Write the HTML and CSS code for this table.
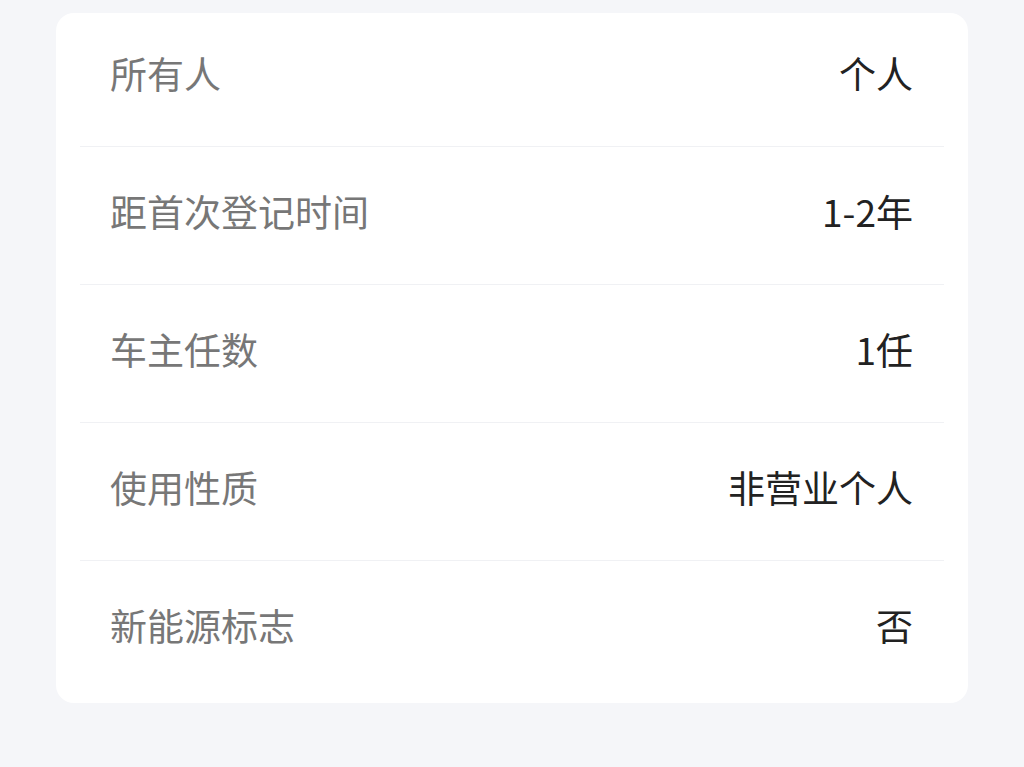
FILE: index.html
```html
<!DOCTYPE html>
<html lang="zh-CN">
<head>
  <meta charset="UTF-8" />
  <title>车辆信息</title>
  <link rel="stylesheet" href="styles.css">
</head>
<body>

  <div class="info-card">
    <div class="info-row first">
      <span class="label">所有人</span>
      <span class="value">个人</span>
    </div>
    <div class="info-row">
      <span class="label">距首次登记时间</span>
      <span class="value">1-2年</span>
    </div>
    <div class="info-row">
      <span class="label">车主任数</span>
      <span class="value">1任</span>
    </div>
    <div class="info-row">
      <span class="label">使用性质</span>
      <span class="value">非营业个人</span>
    </div>
    <div class="info-row last">
      <span class="label">新能源标志</span>
      <span class="value">否</span>
    </div>
  </div>

</body>
</html>
```

FILE: styles.css
```css
body {
  margin: 0;
  background: #f5f6f9;
  font-family: 'Noto Sans CJK SC', 'Noto Sans', sans-serif;
}

.info-card {
  margin: 13px 56px 0 56px;
  background: #fff;
  border-radius: 18px;
  padding: 0 24px;
  height: 690px;
  box-sizing: border-box;
}

.info-row {
  display: flex;
  justify-content: space-between;
  align-items: center;
  height: 138px;
  padding: 0 31px 10px 30px;
  box-sizing: border-box;
  border-bottom: 1px solid #f0f1f4;
  font-size: 37px;
}

.info-row.first {
  height: 134px;
  padding-bottom: 14px;
}

.info-row.last {
  border-bottom: none;
}

.label {
  color: #777;
}

.value {
  color: #222;
}
```
